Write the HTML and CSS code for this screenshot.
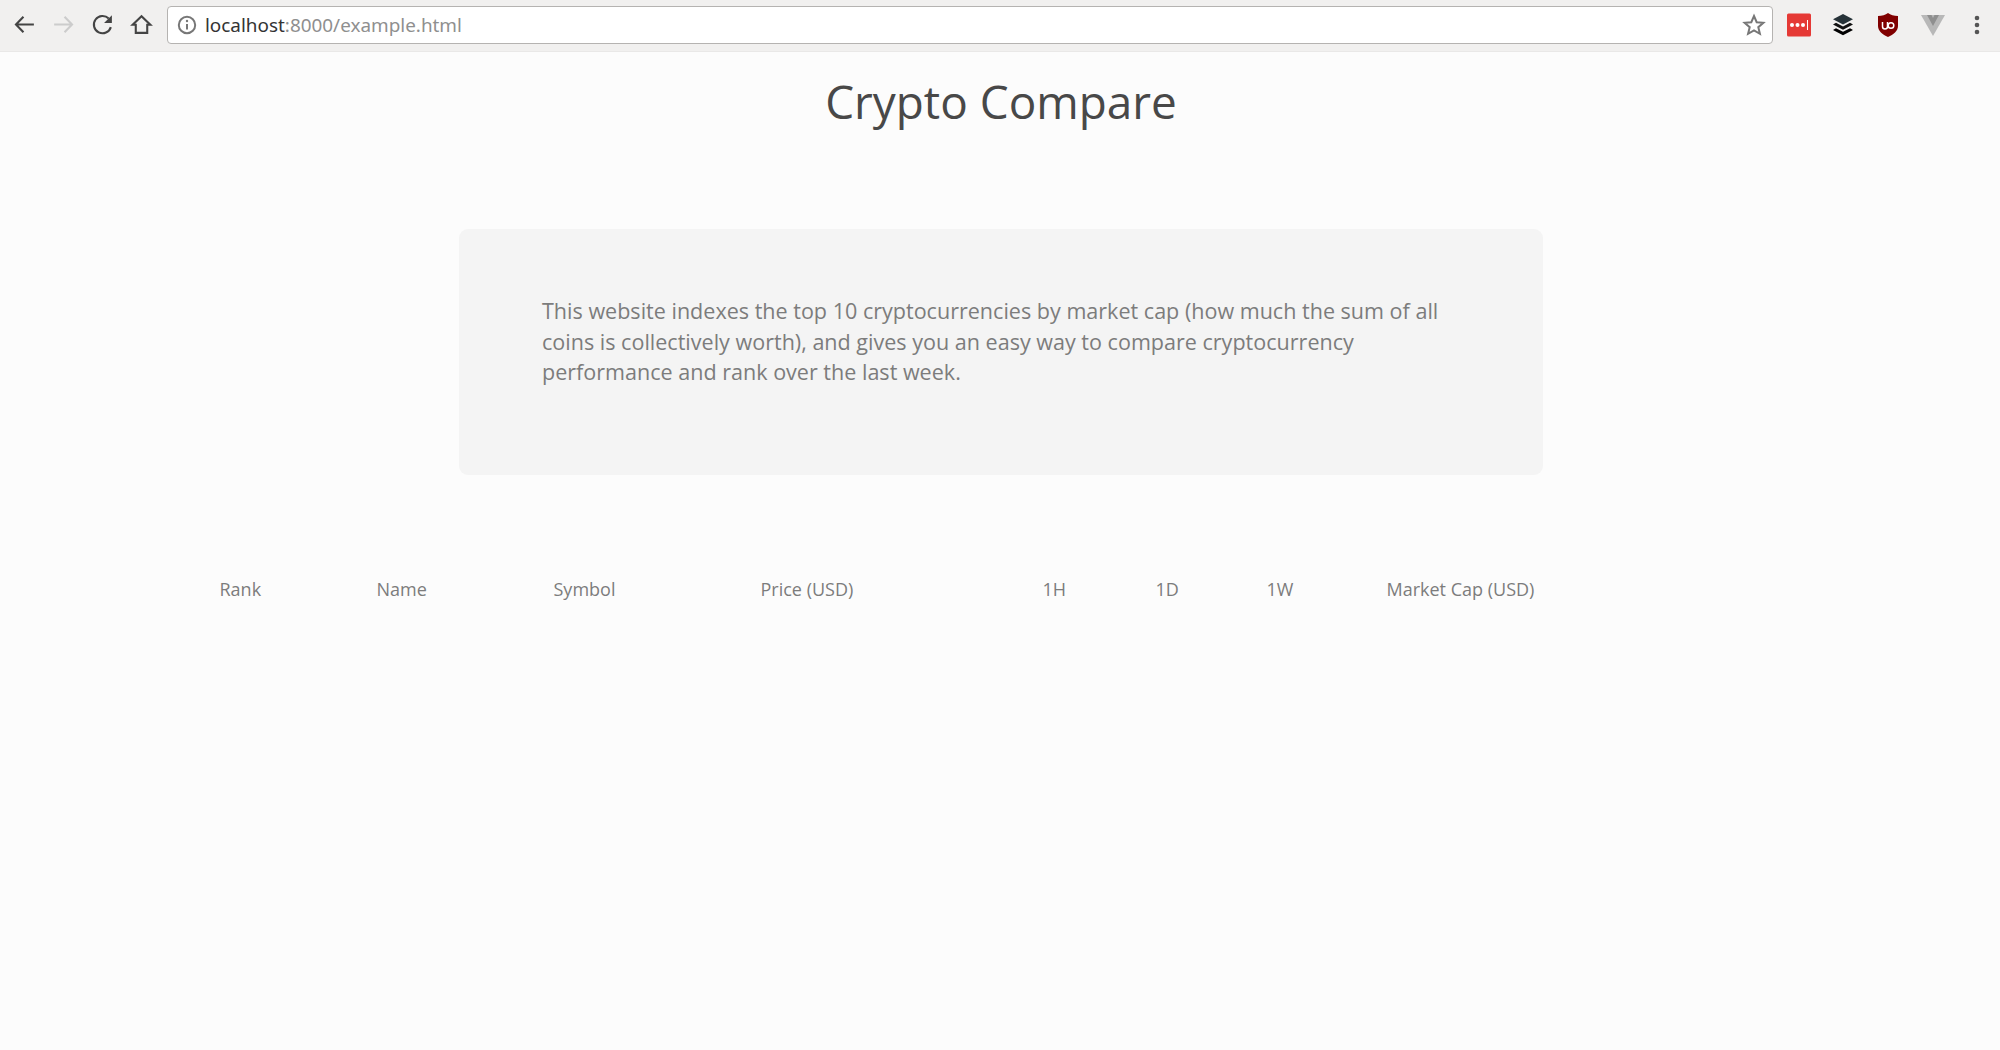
FILE: index.html
```html
<!DOCTYPE html>
<html lang="en">
<head>
<meta charset="utf-8">
<title>Crypto Compare</title>
<link rel="stylesheet" href="styles.css">
</head>
<body>
<header class="toolbar">
  <nav class="nav-buttons">
    <svg class="icon" viewBox="0 0 24 24"><path class="stroke dark" d="M21 12H4M11 4.500 3.800 12 11 19.500"/></svg>
    <svg class="icon" viewBox="0 0 24 24"><path class="stroke faint" d="M3 12h17M13 4.500 20.200 12 13 19.500"/></svg>
    <svg class="icon" viewBox="0 0 24 24"><path class="stroke dark" d="M20 14.500A8.300 8.300 0 1 1 18 6.300"/><path class="fill-dark" d="M21 3v7.500h-7.500z"/></svg>
    <svg class="icon" viewBox="0 0 24 24"><path class="stroke dark" d="M12 4 3.500 12.200h3V20h11v-7.800h3z"/></svg>
  </nav>
  <div class="omnibox">
    <svg class="info" viewBox="0 0 20 20"><circle cx="10" cy="10" r="8.200" class="stroke grey"/><path class="stroke grey" d="M10 9v5.500"/><circle cx="10" cy="6" r="1.200" class="fill-grey"/></svg>
    <span class="url"><span class="host">localhost</span>:8000/example.html</span>
    <svg class="star" viewBox="0 0 24 24"><path class="stroke grey" d="m12 3 2.700 6.200 6.700.6-5.100 4.400 1.600 6.600L12 17.300l-5.900 3.500 1.600-6.600-5.100-4.400 6.700-.6z"/></svg>
  </div>
  <div class="extensions">
    <svg class="ext" viewBox="0 0 24 24"><rect width="24" height="23" y="0.500" rx="1.500" fill="#e53935"/><circle cx="5" cy="12" r="2" fill="#fff"/><circle cx="10.500" cy="12" r="2" fill="#fff"/><circle cx="16" cy="12" r="2" fill="#fff"/><path d="M20.500 7v10" stroke="#fff" stroke-width="1"/></svg>
    <svg class="ext" viewBox="0 0 24 24"><path fill="#263238" d="m12 1 10 5.200L12 11.500 2 6.200z"/><path fill="#111" d="m5 9.800 7 3.600 7-3.600 3 1.700-10 5.200-10-5.200z"/><path fill="#000" d="m5 15.200 7 3.600 7-3.600 3 1.700-10 5.300-10-5.300z"/></svg>
    <svg class="ext" viewBox="0 0 24 24"><path fill="#800000" d="M12 0c2.500 2 6 3 10 3v10c0 5-4.500 8.500-10 11C6.500 21.500 2 18 2 13V3c4 0 7.500-1 10-3z"/><path d="M6.500 9v4.500a2.500 2.500 0 0 0 5 0V9" fill="none" stroke="#fff" stroke-width="1.500"/><circle cx="15" cy="12.500" r="2.800" fill="none" stroke="#fff" stroke-width="1.500"/></svg>
    <svg class="ext" viewBox="0 0 24 24"><path fill="#b8b8b8" d="M0 2h24L12 23z"/><path fill="#8f8f8f" d="M6 2h4.500L12 5l1.500-3H18l-6 11z"/></svg>
    <svg class="menu" viewBox="0 0 24 24"><circle cx="12" cy="5" r="2.300" class="fill-menu"/><circle cx="12" cy="12" r="2.300" class="fill-menu"/><circle cx="12" cy="19" r="2.300" class="fill-menu"/></svg>
  </div>
</header>
<main class="page">
  <h1 class="title">Crypto Compare</h1>
  <section class="intro">
    <p class="intro-text">This website indexes the top 10 cryptocurrencies by market cap (how much the sum of all coins is collectively worth), and gives you an easy way to compare cryptocurrency performance and rank over the last week.</p>
  </section>
  <table class="coins">
    <colgroup>
      <col class="c-rank"><col class="c-name"><col class="c-symbol"><col class="c-price"><col class="c-h"><col class="c-d"><col class="c-w"><col class="c-cap">
    </colgroup>
    <thead>
      <tr><th>Rank</th><th>Name</th><th>Symbol</th><th>Price (USD)</th><th>1H</th><th>1D</th><th>1W</th><th>Market Cap (USD)</th></tr>
    </thead>
  </table>
</main>
</body>
</html>
```
FILE: styles.css
```css
* { box-sizing: border-box; }
html, body { margin: 0; height: 100%; }
body { background: #fcfcfc; font-family: "Open Sans", sans-serif; color: #777; overflow: hidden; }

.toolbar { height: 52px; background: #f1f0ef; border-bottom: 1px solid #e9e8e7; display: flex; align-items: center; padding: 0 0 2px 0; }
.nav-buttons { display: flex; align-items: center; width: 167px; padding-left: 12px; gap: 14px; flex: none; }
.icon { width: 25px; height: 25px; flex: none; }
.stroke { fill: none; stroke-width: 2; }
.dark { stroke: #444; }
.faint { stroke: #ccc; }
.grey { stroke: #777; }
.fill-dark { fill: #444; }
.fill-grey { fill: #777; }
.fill-menu { fill: #555; }

.omnibox { width: 1606px; height: 38px; flex: none; background: #fff; border: 1px solid #b5b3b1; border-radius: 4px; display: flex; align-items: center; padding: 0 6px 0 9px; }
.info { width: 20px; height: 20px; flex: none; }
.url { margin-left: 8px; font: 18.900px "Noto Sans", sans-serif; color: #8f8f8f; flex: 1; }
.host { color: #333; }
.star { width: 24px; height: 24px; flex: none; }

.extensions { display: flex; align-items: center; flex: 1; padding-left: 13.500px; gap: 20.700px; }
.ext { width: 24px; height: 24px; flex: none; }
.menu { width: 24px; height: 24px; flex: none; }

.page { display: flex; flex-direction: column; align-items: center; padding-left: 2px; }
.title { margin: 18px 0 0; font-size: 45.900px; font-weight: 400; line-height: 62px; color: #484848; }
.intro { width: 1084px; height: 246px; margin-top: 97px; background: #f4f4f4; border-radius: 9px; padding: 67px 83px; }
.intro-text { margin: 0; font-size: 21.560px; line-height: 30.600px; color: #7c7c7c; }

.coins { margin-top: 102px; width: 1600px; margin-left: -1px; table-layout: fixed; border-collapse: collapse; }
.coins th { font-size: 18px; font-weight: 400; color: #7c7c7c; text-align: left; padding: 0 0 0 19px; line-height: 25px; }
.c-rank { width: 157px; }
.c-name { width: 177px; }
.c-symbol { width: 207px; }
.c-price { width: 282px; }
.c-h { width: 113px; }
.c-d { width: 111px; }
.c-w { width: 120px; }
.c-cap { width: 433px; }
```
